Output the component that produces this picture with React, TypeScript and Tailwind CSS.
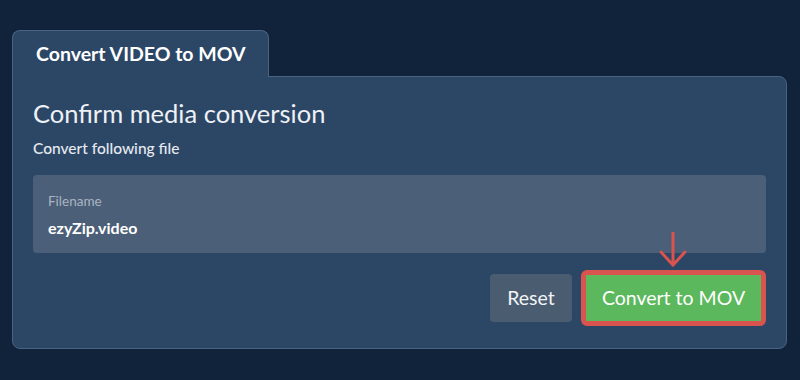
export default function App() {
  return (
    <div className="w-[800px] h-[380px] bg-[#10233a] px-3 pt-[30px] font-['Lato','Noto_Sans',sans-serif] text-white">
      <div className="flex">
        <div className="relative z-10 -mb-px flex h-[47px] w-[257px] items-center rounded-t-lg border border-b-0 border-[#4a6382] bg-[#2c4766] pl-[23px] text-[19.5px] font-bold">
          Convert VIDEO to MOV
        </div>
      </div>
      <div className="w-[775px] rounded-b-lg rounded-tr-lg border border-[#4a6382] bg-[#2c4766] px-5 pt-[20px] pb-[22px]">
        <h2 className="text-[25.5px] leading-[32px] text-[#eef1f5]">Confirm media conversion</h2>
        <p className="mt-[9px] text-[15.5px] font-medium leading-5 text-[#e6eaf0]">Convert following file</p>
        <div className="mt-[17px] h-[78px] rounded bg-[#4b5f78] px-[15px] pt-[18px]">
          <div className="text-[13.5px] leading-4 text-[#aab4c1]">Filename</div>
          <div className="mt-[9px] text-[16px] font-bold leading-5">ezyZip.video</div>
        </div>
        <div className="mt-[17px] flex justify-end gap-[9px]">
          <button className="mt-1 h-12 w-[82px] rounded bg-[#4a5c70] text-[19.5px] text-[#f2f4f7]">Reset</button>
          <div className="relative">
            <svg className="absolute left-[77px] -top-[38px]" width="30" height="36" viewBox="0 0 30 36" fill="none" stroke="#d9534f" strokeWidth="3" strokeLinecap="round">
              <path d="M15 1 V33 M3 20 L15 33 L27 20" />
            </svg>
            <div className="rounded-md bg-[#d9534f] p-[5px]">
              <button className="h-[46px] w-[175px] bg-[#5cb85c] text-[19.5px] text-white">Convert to MOV</button>
            </div>
          </div>
        </div>
      </div>
    </div>
  );
}
